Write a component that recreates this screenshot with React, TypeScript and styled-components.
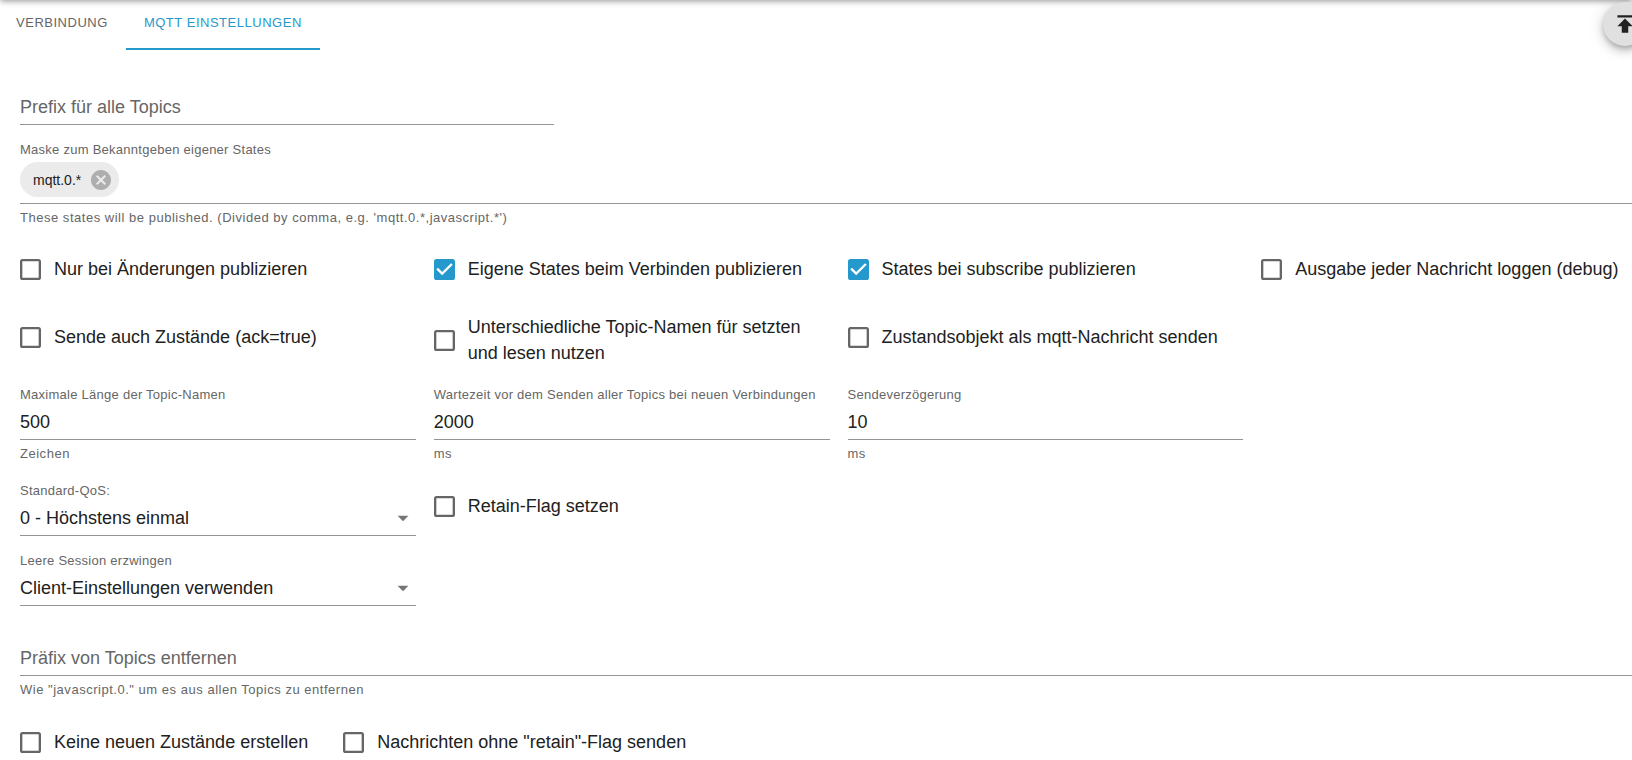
import React, { useId, useState } from 'react';
import styled, { createGlobalStyle } from 'styled-components';

const color = {
  primary: '#2699cc',
  text: '#212121',
  muted: '#666666',
  line: '#949494',
  chip: '#ebebeb',
  fab: '#e0e0e0',
};

const GlobalStyle = createGlobalStyle`
  *, *::before, *::after { box-sizing: border-box; }
  body {
    margin: 0;
    background: #ffffff;
    color: ${color.text};
    font-family: "Liberation Sans", Arial, Helvetica, sans-serif;
    font-size: 18px;
    line-height: 26px;
  }
  button, input, select { font: inherit; color: inherit; }
`;

const Page = styled.div`
  position: relative;
  overflow: hidden;
`;

const TopShadow = styled.div`
  position: absolute;
  top: -11px;
  left: 0;
  right: 0;
  height: 10px;
  box-shadow: 0 2px 4px -1px rgba(0, 0, 0, 0.2), 0 4px 5px rgba(0, 0, 0, 0.14), 0 1px 10px rgba(0, 0, 0, 0.12);
`;

const TabBar = styled.nav`
  display: flex;
  height: 50px;
`;

const Tab = styled.button<{ $active?: boolean }>`
  padding: 0 18px 3px;
  border: 0;
  border-bottom: 2px solid ${(p) => (p.$active ? color.primary : 'transparent')};
  background: none;
  color: ${(p) => (p.$active ? color.primary : color.muted)};
  font-size: 13px;
  letter-spacing: 0.04em;
  text-transform: uppercase;
  cursor: pointer;

  &:first-child { padding-left: 16px; }
`;

const Fab = styled.button`
  position: absolute;
  top: 2px;
  right: -15px;
  display: grid;
  place-items: center;
  width: 44px;
  height: 44px;
  padding: 0;
  border: 0;
  border-radius: 50%;
  background: ${color.fab};
  box-shadow: 0 3px 5px -1px rgba(0, 0, 0, 0.2), 0 6px 10px rgba(0, 0, 0, 0.14), 0 1px 18px rgba(0, 0, 0, 0.12);
  cursor: pointer;
`;

const Form = styled.form`
  display: flex;
  flex-direction: column;
  margin: 0 -25px 0 20px;
`;

const Row = styled.div<{ $columns: number; $top: number }>`
  display: grid;
  grid-template-columns: repeat(${(p) => p.$columns}, minmax(0, 1fr));
  column-gap: 18px;
  align-items: start;
  margin-top: ${(p) => p.$top}px;
`;

const InlineRow = styled.div`
  display: flex;
  gap: 35px;
  margin-top: 24px;
`;

const FieldBox = styled.div`
  display: flex;
  flex-direction: column;
`;

const FieldLabel = styled.label`
  color: ${color.muted};
  font-size: 13px;
  line-height: 20px;
  letter-spacing: 0.02em;
  white-space: nowrap;
`;

const HelperText = styled.p`
  margin: 4px 0 0;
  color: ${color.muted};
  font-size: 13px;
  line-height: 20px;
  letter-spacing: 0.04em;
`;

const TextInput = styled.input`
  width: 100%;
  height: 35px;
  padding: 0;
  border: 0;
  border-bottom: 1px solid ${color.line};
  border-radius: 0;
  background: none;
  outline: none;

  &::placeholder { color: ${color.muted}; opacity: 1; }
`;

const SelectBox = styled.div`
  position: relative;
`;

const SelectInput = styled.select`
  appearance: none;
  width: 100%;
  height: 35px;
  padding: 0 26px 1px 0;
  border: 0;
  border-bottom: 1px solid ${color.line};
  border-radius: 0;
  background: none;
  outline: none;
`;

const SelectArrow = styled.svg`
  position: absolute;
  top: 4px;
  right: 0;
  width: 26px;
  height: 26px;
  fill: #757575;
  pointer-events: none;
`;

const ChipLine = styled.div`
  display: flex;
  padding: 2px 0 6px;
  border-bottom: 1px solid ${color.line};
`;

const Chip = styled.span`
  display: inline-flex;
  align-items: center;
  gap: 8px;
  height: 35px;
  padding: 0 6px 0 13px;
  border-radius: 18px;
  background: ${color.chip};
  font-size: 14px;
`;

const ChipRemove = styled.button`
  display: flex;
  padding: 0;
  border: 0;
  background: none;
  cursor: pointer;
`;

const CheckLabel = styled.label<{ $height: number }>`
  display: flex;
  align-items: center;
  gap: 13px;
  min-height: ${(p) => p.$height}px;
  cursor: pointer;
`;

const CheckMark = styled.span`
  display: grid;
  flex: none;
  width: 21px;
  height: 21px;

  > * { grid-area: 1 / 1; width: 21px; height: 21px; margin: 0; }
  input { opacity: 0; cursor: pointer; }
`;

const CHECKED =
  'M19 3H5c-1.11 0-2 .9-2 2v14c0 1.1.89 2 2 2h14c1.11 0 2-.9 2-2V5c0-1.1-.89-2-2-2zm-9 14l-5-5 1.41-1.41L10 14.17l7.59-7.59L19 8l-9 9z';
const UNCHECKED =
  'M19 5v14H5V5h14m0-2H5c-1.1 0-2 .9-2 2v14c0 1.1.9 2 2 2h14c1.1 0 2-.9 2-2V5c0-1.1-.9-2-2-2z';

function Check({ label, on = false, height = 46 }: { label: string; on?: boolean; height?: number }) {
  const [checked, setChecked] = useState(on);
  return (
    <CheckLabel $height={height}>
      <CheckMark>
        <svg viewBox="3 3 18 18" fill={checked ? color.primary : color.muted} aria-hidden="true">
          <path d={checked ? CHECKED : UNCHECKED} />
        </svg>
        <input type="checkbox" checked={checked} onChange={(e) => setChecked(e.target.checked)} />
      </CheckMark>
      <span>{label}</span>
    </CheckLabel>
  );
}

function NumberField({ label, value, helper }: { label: string; value: string; helper: string }) {
  const id = useId();
  return (
    <FieldBox>
      <FieldLabel htmlFor={id}>{label}</FieldLabel>
      <TextInput id={id} inputMode="numeric" defaultValue={value} />
      <HelperText>{helper}</HelperText>
    </FieldBox>
  );
}

function SelectField({ label, options }: { label: string; options: string[] }) {
  const id = useId();
  return (
    <FieldBox>
      <FieldLabel htmlFor={id}>{label}</FieldLabel>
      <SelectBox>
        <SelectInput id={id}>
          {options.map((option) => (
            <option key={option}>{option}</option>
          ))}
        </SelectInput>
        <SelectArrow viewBox="0 0 24 24" aria-hidden="true">
          <path d="M7 10l5 5 5-5z" />
        </SelectArrow>
      </SelectBox>
    </FieldBox>
  );
}

export default function App() {
  return (
    <Page>
      <GlobalStyle />
      <TabBar>
        <Tab type="button">Verbindung</Tab>
        <Tab type="button" $active>MQTT Einstellungen</Tab>
      </TabBar>

      <Form onSubmit={(e) => e.preventDefault()}>
        <Row $columns={3} $top={40}>
          <TextInput placeholder="Prefix für alle Topics" aria-label="Prefix für alle Topics" />
        </Row>

        <Row $columns={1} $top={15}>
          <FieldBox>
            <FieldLabel as="span">Maske zum Bekanntgeben eigener States</FieldLabel>
            <ChipLine>
              <Chip>
                mqtt.0.*
                <ChipRemove type="button" aria-label="mqtt.0.*">
                  <svg width="24" height="24" viewBox="0 0 24 24" fill="#aeaeae" aria-hidden="true">
                    <path d="M12 2C6.47 2 2 6.47 2 12s4.47 10 10 10 10-4.47 10-10S17.53 2 12 2zm5 13.59L15.59 17 12 13.41 8.41 17 7 15.59 10.59 12 7 8.41 8.41 7 12 10.59 15.59 7 17 8.41 13.41 12 17 15.59z" />
                  </svg>
                </ChipRemove>
              </Chip>
            </ChipLine>
            <HelperText>
              These states will be published. (Divided by comma, e.g. 'mqtt.0.*,javascript.*')
            </HelperText>
          </FieldBox>
        </Row>

        <Row $columns={4} $top={18}>
          <Check label="Nur bei Änderungen publizieren" />
          <Check label="Eigene States beim Verbinden publizieren" on />
          <Check label="States bei subscribe publizieren" on />
          <Check label="Ausgabe jeder Nachricht loggen (debug)" />
        </Row>

        <Row $columns={4} $top={22}>
          <Check label="Sende auch Zustände (ack=true)" />
          <Check label="Unterschiedliche Topic-Namen für setzten und lesen nutzen" />
          <Check label="Zustandsobjekt als mqtt-Nachricht senden" />
        </Row>

        <Row $columns={4} $top={19}>
          <NumberField label="Maximale Länge der Topic-Namen" value="500" helper="Zeichen" />
          <NumberField label="Wartezeit vor dem Senden aller Topics bei neuen Verbindungen" value="2000" helper="ms" />
          <NumberField label="Sendeverzögerung" value="10" helper="ms" />
        </Row>

        <Row $columns={4} $top={17}>
          <SelectField label="Standard-QoS:" options={['0 - Höchstens einmal']} />
          <Check label="Retain-Flag setzen" height={50} />
        </Row>

        <Row $columns={4} $top={15}>
          <SelectField label="Leere Session erzwingen" options={['Client-Einstellungen verwenden']} />
        </Row>

        <Row $columns={1} $top={35}>
          <FieldBox>
            <TextInput placeholder="Präfix von Topics entfernen" aria-label="Präfix von Topics entfernen" />
            <HelperText>Wie "javascript.0." um es aus allen Topics zu entfernen</HelperText>
          </FieldBox>
        </Row>

        <InlineRow>
          <Check label="Keine neuen Zustände erstellen" height={36} />
          <Check label={'Nachrichten ohne "retain"-Flag senden'} height={36} />
        </InlineRow>
      </Form>

      <TopShadow />
      <Fab type="button" aria-label="Nach oben">
        <svg width="26" height="26" viewBox="0 0 24 24" fill={color.text} aria-hidden="true">
          <path d="M5 4v2h14V4H5zm0 10h4v6h6v-6h4l-7-7-7 7z" />
        </svg>
      </Fab>
    </Page>
  );
}
